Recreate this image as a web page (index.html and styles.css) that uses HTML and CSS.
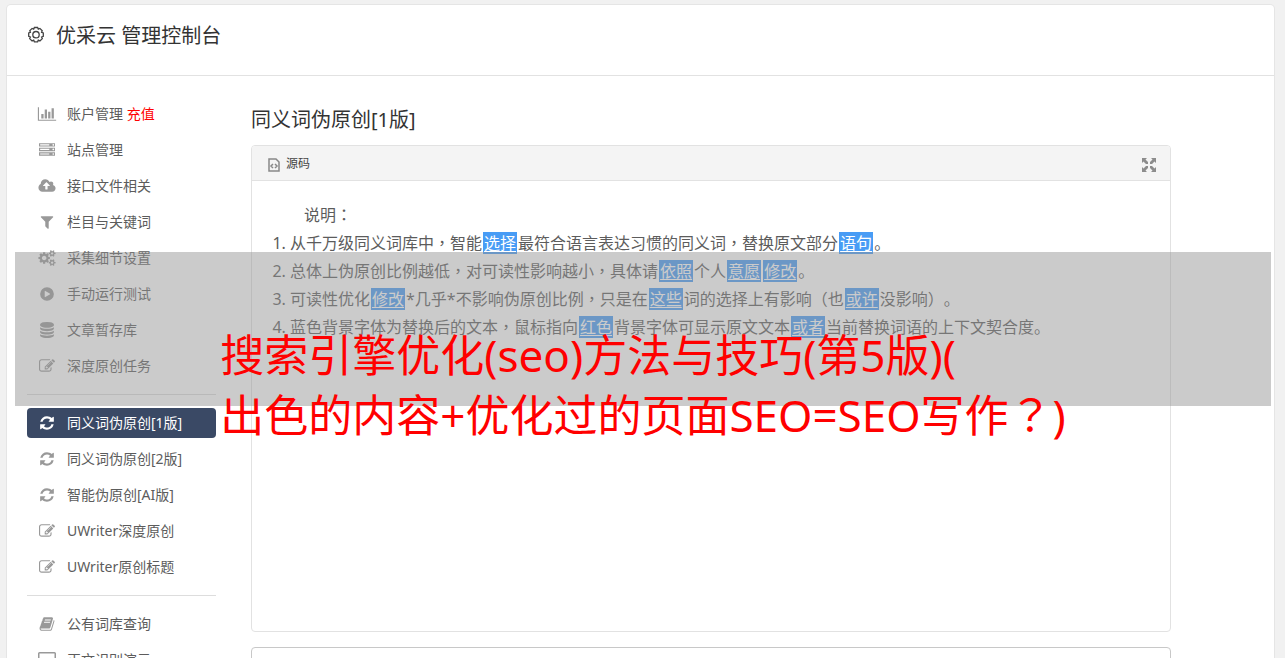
FILE: index.html
```html
<!DOCTYPE html>
<html lang="zh-CN">
<head>
<meta charset="utf-8">
<title>优采云 管理控制台</title>
<link rel="stylesheet" href="styles.css">
</head>
<body>
<svg class="sprite" aria-hidden="true">
  <symbol id="chart" viewBox="0 0 2048 1792"><path d="M640 896v512h-256v-512h256zm384-512v1024h-256v-1024h256zm1024 1152v128h-2048v-1536h128v1408h1920zm-640-896v768h-256v-768h256zm384-384v1152h-256v-1152h256z"/></symbol>
  <symbol id="server" viewBox="0 0 1792 1792"><path d="M128 1408h1024v-128h-1024v128zm0-512h1024v-128h-1024v128zm1568 448q0-40-28-68t-68-28-68 28-28 68 28 68 68 28 68-28 28-68zm-1568-960h1024v-128h-1024v128zm1568 448q0-40-28-68t-68-28-68 28-28 68 28 68 68 28 68-28 28-68zm0-512q0-40-28-68t-68-28-68 28-28 68 28 68 68 28 68-28 28-68zm96 832v384h-1792v-384h1792zm0-512v384h-1792v-384h1792zm0-512v384h-1792v-384h1792z"/></symbol>
  <symbol id="cloud" viewBox="0 0 1920 1792"><path d="M1280 864q0-14-9-23l-352-352q-9-9-23-9t-23 9l-351 351q-10 12-10 24 0 14 9 23t23 9h224v352q0 13 9.5 22.5t22.5 9.5h192q13 0 22.5-9.5t9.5-22.5v-352h224q13 0 22.5-9.5t9.5-22.5zm640 288q0 159-112.5 271.5t-271.5 112.5h-1088q-185 0-316.5-131.5t-131.5-316.5q0-130 70-240t188-165q-2-30-2-43 0-212 150-362t362-150q156 0 285.5 87t188.5 231q71-62 166-62 106 0 181 75t75 181q0 76-41 138 130 31 213.5 135.5t83.5 238.5z"/></symbol>
  <symbol id="filter" viewBox="0 0 1792 1792"><path d="M1595 295q17 41-14 70l-493 493v742q0 42-39 59-13 5-25 5-27 0-45-19l-256-256q-19-19-19-45v-486l-493-493q-31-29-14-70 17-39 59-39h1280q42 0 59 39z"/></symbol>
  <symbol id="cogs" viewBox="0 0 1920 1792"><path d="M896 896q0-106-75-181t-181-75-181 75-75 181 75 181 181 75 181-75 75-181zm768 512q0-52-38-90t-90-38-90 38-38 90q0 53 37.5 90.5t90.5 37.5 90.5-37.5 37.5-90.5zm0-1024q0-52-38-90t-90-38-90 38-38 90q0 53 37.5 90.5t90.5 37.5 90.5-37.5 37.5-90.5zm-384 421v185q0 10-7 19.5t-16 10.5l-155 24q-11 35-32 76 34 48 90 115 7 11 7 20 0 12-7 19-23 30-82.5 89.5t-78.5 59.5q-11 0-21-7l-115-90q-37 19-77 31-11 108-23 155-7 24-30 24h-186q-11 0-20-7.5t-10-17.5l-23-153q-34-10-75-31l-118 89q-7 7-20 7-11 0-21-8-144-133-144-160 0-9 7-19 10-14 41-53t47-61q-23-44-35-82l-152-24q-10-1-17-9.5t-7-19.5v-185q0-10 7-19.5t16-10.5l155-24q11-35 32-76-34-48-90-115-7-11-7-20 0-12 7-20 22-30 82-89t79-59q11 0 21 7l115 90q34-18 77-32 11-108 23-154 7-24 30-24h186q11 0 20 7.5t10 17.5l23 153q34 10 75 31l118-89q8-7 20-7 11 0 21 8 144 133 144 160 0 8-7 19-12 16-42 54t-45 60q23 48 34 82l152 23q10 2 17 10.5t7 19.5zm640 533v140q0 16-149 31-12 27-30 52 51 113 51 138 0 4-4 7-122 71-124 71-8 0-46-47t-52-68q-20 2-30 2t-30-2q-14 21-52 68t-46 47q-2 0-124-71-4-3-4-7 0-25 51-138-18-25-30-52-149-15-149-31v-140q0-16 149-31 13-29 30-52-51-113-51-138 0-4 4-7 4-2 35-20t59-34 30-16q8 0 46 46.5t52 67.5q20-2 30-2t30 2q51-71 92-112l6-2q4 0 124 70 4 3 4 7 0 25-51 138 17 23 30 52 149 15 149 31zm0-1024v140q0 16-149 31-12 27-30 52 51 113 51 138 0 4-4 7-122 71-124 71-8 0-46-47t-52-68q-20 2-30 2t-30-2q-14 21-52 68t-46 47q-2 0-124-71-4-3-4-7 0-25 51-138-18-25-30-52-149-15-149-31v-140q0-16 149-31 13-29 30-52-51-113-51-138 0-4 4-7 4-2 35-20t59-34 30-16q8 0 46 46.5t52 67.5q20-2 30-2t30 2q51-71 92-112l6-2q4 0 124 70 4 3 4 7 0 25-51 138 17 23 30 52 149 15 149 31z"/></symbol>
  <symbol id="play" viewBox="0 0 1792 1792"><path fill-rule="evenodd" d="M896 128a768 768 0 1 1 0 1536a768 768 0 1 1 0-1536zM704 548q-64-24-64 56v584q0 78 64 52l500-288q62-56 0-112z"/></symbol>
  <symbol id="database" viewBox="0 0 1792 1792"><path d="M896 768q237 0 443-43t325-127v170q0 69-103 128t-280 93.500-385 34.500-385-34.500-280-93.500-103-128v-170q119 84 325 127t443 43zm0 768q237 0 443-43t325-127v170q0 69-103 128t-280 93.500-385 34.500-385-34.500-280-93.500-103-128v-170q119 84 325 127t443 43zm0-384q237 0 443-43t325-127v170q0 69-103 128t-280 93.500-385 34.500-385-34.500-280-93.500-103-128v-170q119 84 325 127t443 43zm0-1152q208 0 385 34.500t280 93.500 103 128v128q0 69-103 128t-280 93.500-385 34.500-385-34.500-280-93.500-103-128v-128q0-69 103-128t280-93.500 385-34.500z"/></symbol>
  <symbol id="edit" viewBox="0 0 1792 1792"><path d="M888 1184l116-116-152-152-116 116v56h96v96h56zm440-720q-16-16-33 1l-350 350q-17 17-1 33t33-1l350-350q17-17 1-33zm80 594v190q0 119-84.500 203.500t-203.500 84.500h-832q-119 0-203.500-84.500t-84.500-203.500v-832q0-119 84.500-203.500t203.500-84.500h832q63 0 117 25 15 7 18 23 3 17-9 29l-49 49q-14 14-32 8-23-6-45-6h-832q-66 0-113 47t-47 113v832q0 66 47 113t113 47h832q66 0 113-47t47-113v-126q0-13 9-22l64-64q15-15 35-7t20 29zm-96-738l288 288-672 672h-288v-288zm444 132l-92 92-288-288 92-92q28-28 68-28t68 28l152 152q28 28 28 68t-28 68z"/></symbol>
  <symbol id="refresh" viewBox="0 0 1792 1792"><path d="M1639 1056q0 5-1 7-64 268-268 434.500t-478 166.500q-146 0-282.500-55t-243.500-157l-129 129q-19 19-45 19t-45-19-19-45v-448q0-26 19-45t45-19h448q26 0 45 19t19 45-19 45l-137 137q71 66 161 102t187 36q134 0 250-65t186-179q11-17 53-117 8-23 30-23h192q13 0 22.500 9.500t9.500 22.500zm25-800v448q0 26-19 45t-45 19h-448q-26 0-45-19t-19-45 19-45l138-138q-148-137-349-137-134 0-250 65t-186 179q-11 17-53 117-8 23-30 23h-199q-13 0-22.500-9.500t-9.500-22.500v-7q65-268 270-434.500t480-166.500q146 0 284 55.500t245 156.500l130-129q19-19 45-19t45 19 19 45z"/></symbol>
  <symbol id="book" viewBox="0 0 1792 1792"><path d="M1703 478q40 57 18 129l-275 906q-19 64-76.500 107.500t-122.500 43.500h-923q-77 0-148.500-53.500t-99.500-131.500q-24-67-2-127 0-4 3-27t4-37q1-8-3-21.500t-3-19.500q2-11 8-21t16.500-23.500 16.500-23.500q23-38 45-91.500t30-91.500q3-10 .5-30t-.5-28q3-11 17-28t17-23q21-36 42-92t25-90q1-9-2.500-32t.5-28q4-13 22-30.500t22-22.500q19-26 42.500-84.500t27.500-96.500q1-8-3-25.500t-2-26.500q2-8 9-18t18-23 17-21q8-12 16.500-30.500t15-35 16-36 19.500-32 26.500-23.500 36-11.500 47.500 5.500l-1 3q38-9 51-9h761q74 0 114 56t18 130l-274 906q-36 119-71.500 153.500t-128.500 34.500h-869q-27 0-38 15-11 16-1 43 24 70 144 70h923q29 0 56-15.500t35-41.500l300-987q7-22 5-57 38 15 59 43zm-1064 2q-4 13 2 22.500t20 9.500h608q13 0 25.500-9.500t16.500-22.500l21-64q4-13-2-22.500t-20-9.500h-608q-13 0-25.500 9.500t-16.500 22.500zm-83 256q-4 13 2 22.500t20 9.500h608q13 0 25.500-9.500t16.500-22.500l21-64q4-13-2-22.500t-20-9.500h-608q-13 0-25.500 9.500t-16.500 22.500z"/></symbol>
  <symbol id="screen" viewBox="0 0 18 16"><path fill-rule="evenodd" d="M1.500 0h15a1.500 1.500 0 0 1 1.500 1.500v10a1.500 1.500 0 0 1-1.500 1.500h-5l1 3h-7l1-3h-5a1.500 1.500 0 0 1-1.500-1.500v-10a1.500 1.500 0 0 1 1.500-1.500zM1.500 1.500v9h15v-9z"/></symbol>
</svg>

<div class="page">
  <header class="topbar">
    <svg class="gear" viewBox="0 0 20 20" aria-hidden="true"><path d="M8.400 1.500h3.200l.7 1.600 1.600-.7 2.300 2.300-.6 1.600 1.700.6v3.400l-1.700.7.7 1.600-2.400 2.300-1.600-.7-.7 1.600H8.400l-.7-1.600-1.600.7-2.400-2.300.7-1.600-1.700-.7V6.900l1.700-.6-.6-1.600 2.300-2.300 1.600.7z"/><circle cx="10" cy="8.700" r="3.200"/></svg>
    <h1 class="brand">优采云 管理控制台</h1>
  </header>

  <div class="layout">
    <nav class="sidebar">
      <ul class="menu">
        <li><a class="item" href="#"><svg class="icon"><use href="#chart"/></svg><span>账户管理 <span class="hot">充值</span></span></a></li>
        <li><a class="item" href="#"><svg class="icon"><use href="#server"/></svg>站点管理</a></li>
        <li><a class="item" href="#"><svg class="icon"><use href="#cloud"/></svg>接口文件相关</a></li>
        <li><a class="item" href="#"><svg class="icon"><use href="#filter"/></svg>栏目与关键词</a></li>
        <li><a class="item" href="#"><svg class="icon"><use href="#cogs"/></svg>采集细节设置</a></li>
        <li><a class="item" href="#"><svg class="icon"><use href="#play"/></svg>手动运行测试</a></li>
        <li><a class="item" href="#"><svg class="icon"><use href="#database"/></svg>文章暂存库</a></li>
        <li><a class="item" href="#"><svg class="icon"><use href="#edit"/></svg>深度原创任务</a></li>
      </ul>
      <ul class="menu">
        <li><a class="item active" href="#"><svg class="icon"><use href="#refresh"/></svg>同义词伪原创[1版]</a></li>
        <li><a class="item" href="#"><svg class="icon"><use href="#refresh"/></svg>同义词伪原创[2版]</a></li>
        <li><a class="item" href="#"><svg class="icon"><use href="#refresh"/></svg>智能伪原创[AI版]</a></li>
        <li><a class="item" href="#"><svg class="icon"><use href="#edit"/></svg>UWriter深度原创</a></li>
        <li><a class="item" href="#"><svg class="icon"><use href="#edit"/></svg>UWriter原创标题</a></li>
      </ul>
      <ul class="menu">
        <li><a class="item" href="#"><svg class="icon"><use href="#book"/></svg>公有词库查询</a></li>
        <li><a class="item" href="#"><svg class="icon"><use href="#screen"/></svg>正文识别演示</a></li>
      </ul>
    </nav>

    <main class="content">
      <h2 class="title">同义词伪原创[1版]</h2>
      <section class="editor">
        <div class="toolbar">
          <button class="tool" type="button"><svg class="source" viewBox="0 0 12 14" aria-hidden="true"><path d="M1 1h7l3 3v9H1zM5 6L3 8l2 2M7 6l2 2-2 2"/></svg>源码</button>
          <button class="tool" type="button" aria-label="全屏"><svg class="expand" viewBox="0 0 14 14" aria-hidden="true"><path d="M0 0h5L3.500 1.500 6 4v2H4L1.500 3.500 0 5zM14 0v5l-1.500-1.500L10 6H8V4l2.500-2.500L9 0zM0 14V9l1.500 1.500L4 8h2v2l-2.500 2.500L5 14zM14 14H9l1.500-1.500L8 10V8h2l2.500 2.500L14 9z"/></svg></button>
        </div>
        <div class="document">
          <p class="lead">说明<span class="mid" lang="zh-TW">：</span></p>
          <ol class="notes">
            <li>从千万级同义词库中<span class="mid" lang="zh-TW">，</span>智能<mark>选择</mark>最符合语言表达习惯的同义词<span class="mid" lang="zh-TW">，</span>替换原文部分<mark>语句</mark>。</li>
            <li>总体上伪原创比例越低<span class="mid" lang="zh-TW">，</span>对可读性影响越小<span class="mid" lang="zh-TW">，</span>具体请<mark>依照</mark>个人<mark>意愿</mark><mark>修改</mark>。</li>
            <li>可读性优化<mark>修改</mark>*几乎*不影响伪原创比例<span class="mid" lang="zh-TW">，</span>只是在<mark>这些</mark>词的选择上有影响（也<mark>或许</mark>没影响<span class="mid" lang="zh-TW">）</span>。</li>
            <li>蓝色背景字体为替换后的文本<span class="mid" lang="zh-TW">，</span>鼠标指向<mark>红色</mark>背景字体可显示原文文本<mark>或者</mark>当前替换词语的上下文契合度。</li>
          </ol>
        </div>
      </section>
      <textarea class="result" aria-label="结果"></textarea>
    </main>
  </div>

  <div class="banner">
    <p class="caption">搜索引擎优化(seo)方法与技巧(第5版)(<br>出色的内容+优化过的页面SEO=SEO写作<span class="mid" lang="zh-TW">？</span>)</p>
  </div>
</div>
</body>
</html>
```
FILE: styles.css
```css
* {
  box-sizing: border-box;
}

html {
  scrollbar-width: none;
}

body {
  margin: 0;
  padding: 5px 11px 0 7px;
  background: #f1f1f1;
  color: #5c5c5c;
  font: 14px/20px "Noto Sans", "Noto Sans CJK SC", sans-serif;
  text-spacing-trim: space-all;
}

h1,
h2,
p,
ul,
ol {
  margin: 0;
  padding: 0;
  font-weight: normal;
}

.sprite {
  position: absolute;
  width: 0;
  height: 0;
}

.page {
  position: relative;
  background: #fff;
  border-radius: 4px;
  box-shadow: 0 0 0 1px #e5e5e5;
}

.topbar {
  display: flex;
  align-items: flex-start;
  gap: 10px;
  height: 71px;
  padding: 16px 19px;
  border-bottom: 1px solid #e2e2e2;
}

.gear {
  width: 20px;
  height: 20px;
  margin-top: 5px;
  fill: none;
  stroke: #444;
  stroke-width: 1.3;
}

.brand,
.title {
  color: #333;
  font-size: 20px;
  line-height: 30px;
}

.layout {
  display: grid;
  grid-template-columns: 189px minmax(0, 1fr);
  gap: 35px;
  padding: 23px 103px 20px 20px;
}

.menu {
  display: grid;
  gap: 6px;
  list-style: none;
}

.menu + .menu {
  margin-top: 13px;
  padding-top: 13px;
  border-top: 1px solid #ddd;
}

.item {
  display: flex;
  align-items: center;
  gap: 10px;
  height: 30px;
  padding: 0 10px;
  border-radius: 4px;
  color: #5c5c5c;
  text-decoration: none;
}

.icon {
  flex: none;
  width: 20px;
  height: 16px;
  fill: #999;
}

.active {
  background: #3a4965;
  color: #fff;
}

.active .icon {
  fill: #fff;
}

.hot {
  color: #f00;
}

.title {
  margin: 6px 0 10px;
}

.editor {
  min-height: 487px;
  border: 1px solid #e2e2e2;
  border-radius: 4px;
}

.toolbar {
  display: flex;
  justify-content: space-between;
  height: 35px;
  padding: 2px 14px 0;
  border-bottom: 1px solid #e2e2e2;
  border-radius: 3px 3px 0 0;
  background: #f4f4f4;
}

.tool {
  display: flex;
  align-items: center;
  gap: 6px;
  padding: 0 0 0 2px;
  border: 0;
  background: none;
  color: #444;
  font: inherit;
  font-size: 12px;
}

.source {
  width: 12px;
  height: 14px;
  margin-top: 2px;
  fill: none;
  stroke: #888;
  stroke-width: 1.5;
}

.expand {
  width: 14px;
  height: 14px;
  margin-top: 2px;
  fill: #8c8c8c;
}

.document {
  padding: 20px;
  font-size: 16px;
  line-height: 28px;
}

.lead {
  text-indent: 32px;
}

.notes {
  padding-left: 18px;
}

.mid {
  font-family: "Noto Sans CJK TC", sans-serif;
  line-height: 1;
}

mark {
  margin: 0 1px;
  padding: 0 1px;
  background: #489cf5;
  color: #fff;
  text-decoration: underline;
  text-underline-offset: 2px;
}

.result {
  display: block;
  width: 100%;
  height: 120px;
  margin-top: 15px;
  border: 1px solid #c8c8c8;
  border-radius: 4px;
  resize: none;
}

.banner {
  position: absolute;
  top: 247px;
  right: 3px;
  left: 8px;
  display: flex;
  justify-content: center;
  height: 154px;
  padding-top: 73px;
  background: rgba(146, 146, 146, 0.48);
}

.caption {
  color: #f00;
  font-size: 44px;
  line-height: 60px;
  white-space: nowrap;
}
```
